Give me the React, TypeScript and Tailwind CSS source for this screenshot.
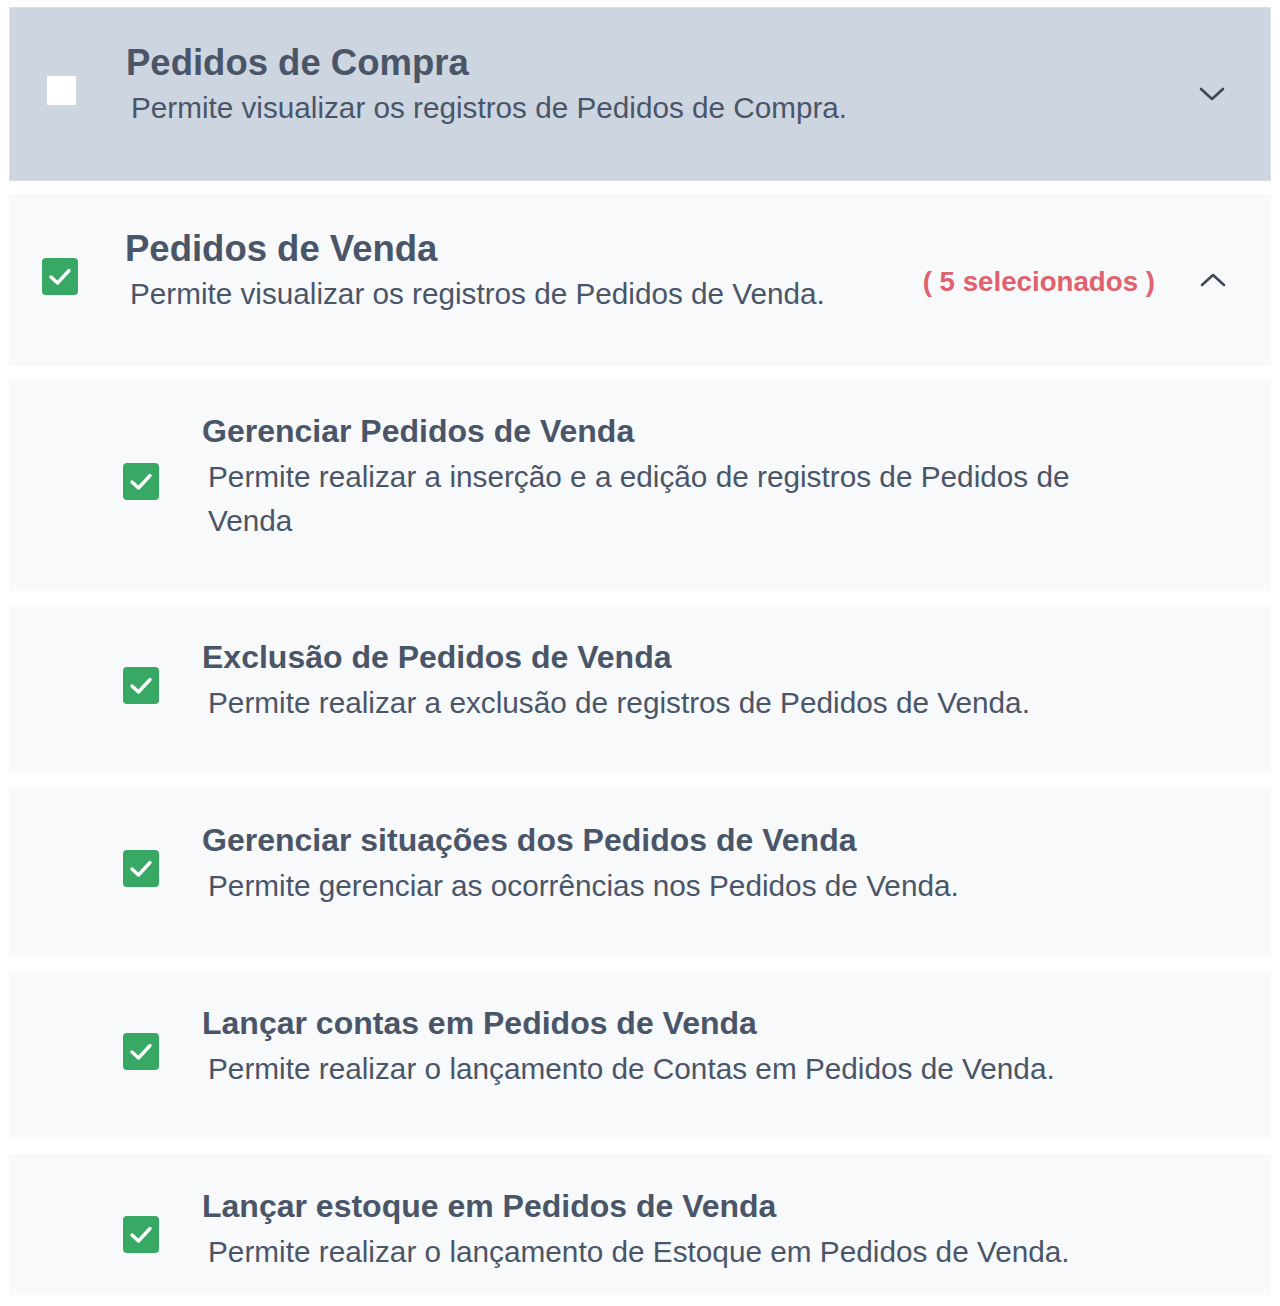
import React from 'react';

interface Permission {
  title: string;
  description: string;
}

const children: Permission[] = [
  {
    title: 'Gerenciar Pedidos de Venda',
    description: 'Permite realizar a inserção e a edição de registros de Pedidos de Venda',
  },
  {
    title: 'Exclusão de Pedidos de Venda',
    description: 'Permite realizar a exclusão de registros de Pedidos de Venda.',
  },
  {
    title: 'Gerenciar situações dos Pedidos de Venda',
    description: 'Permite gerenciar as ocorrências nos Pedidos de Venda.',
  },
  {
    title: 'Lançar contas em Pedidos de Venda',
    description: 'Permite realizar o lançamento de Contas em Pedidos de Venda.',
  },
  {
    title: 'Lançar estoque em Pedidos de Venda',
    description: 'Permite realizar o lançamento de Estoque em Pedidos de Venda.',
  },
];

const CheckedBox: React.FC = () => (
  <div className="w-[36px] h-[37px] rounded-[4px] bg-[#38a865] flex items-center justify-center">
    <svg width="36" height="37" viewBox="0 0 36 37" fill="none">
      <polyline
        points="9,19 15.5,25 27,12.5"
        stroke="white"
        strokeWidth="3.4"
        strokeLinecap="round"
        strokeLinejoin="round"
      />
    </svg>
  </div>
);

const Chevron: React.FC<{ up?: boolean }> = ({ up }) => (
  <svg width="28" height="16" viewBox="0 0 28 16" fill="none">
    <polyline
      points={up ? '3,13 14,3 25,13' : '3,3 14,13 25,3'}
      stroke="#3d4756"
      strokeWidth="2.6"
      strokeLinecap="round"
      strokeLinejoin="round"
    />
  </svg>
);

const ChildRow: React.FC<{ item: Permission; first?: boolean; last?: boolean }> = ({ item, first, last }) => (
  <div
    className={`bg-[#f7f9fb] flex items-center pt-[28px] ${last ? 'pb-[21px]' : 'pb-[48px]'} ${
      first ? 'mb-[-1px]' : ''
    }`}
  >
    {/* checkbox column */}
    <div className="w-[193px] shrink-0 pl-[114px] mt-[12px] self-center">
      <CheckedBox />
    </div>
    <div className="flex flex-col">
      <div className="text-[32px] leading-[48px] font-bold text-[#4a5568]">{item.title}</div>
      <div className="w-[900px] pl-[6px] text-[29.75px] leading-[44px] text-[#4a5568]">
        {item.description}
      </div>
    </div>
  </div>
);

export default function App() {
  return (
    <div
      className="bg-white min-h-[1306px] px-[9px] pt-[7px] flex flex-col gap-[15px]"
      style={{ fontFamily: '"Liberation Sans", Arial, sans-serif' }}
    >
      {/* Pedidos de Compra - collapsed */}
      <div className="bg-[#cdd5e0] border border-[#d9dfe7] flex items-center pt-[32px] pb-[50px] mb-[-2px]">
        <div className="w-[116px] shrink-0 pr-[14px] flex justify-center mt-[10px]">
          <div className="w-[29px] h-[29px] bg-white rounded-[1px]" />
        </div>
        <div className="flex-1 flex flex-col">
          <div className="text-[36.5px] leading-[46px] font-bold text-[#4a5568]">Pedidos de Compra</div>
          <div className="pl-[5px] text-[29.7px] leading-[44px] text-[#4a5568]">
            Permite visualizar os registros de Pedidos de Compra.
          </div>
        </div>
        <div className="pr-[44px] mt-[18px]">
          <Chevron />
        </div>
      </div>

      {/* Pedidos de Venda - expanded */}
      <div className="bg-[#f7f9fb] flex items-center pt-[32px] pb-[50px] mb-[-2px]">
        <div className="w-[116px] shrink-0 pr-[14px] flex justify-center mt-[10px]">
          <CheckedBox />
        </div>
        <div className="flex-1 flex flex-col">
          <div className="text-[36.5px] leading-[46px] font-bold text-[#4a5568]">Pedidos de Venda</div>
          <div className="pl-[5px] text-[29.7px] leading-[44px] text-[#4a5568]">
            Permite visualizar os registros de Pedidos de Venda.
          </div>
        </div>
        <div className="mt-[21px] mr-[44px] text-[27.7px] font-bold text-[#e0626e]">( 5 selecionados )</div>
        <div className="pr-[44px] mt-[18px]">
          <Chevron up />
        </div>
      </div>

      {children.map((c, i) => (
        <ChildRow key={c.title} item={c} first={i === 0} last={i === children.length - 1} />
      ))}
    </div>
  );
}
